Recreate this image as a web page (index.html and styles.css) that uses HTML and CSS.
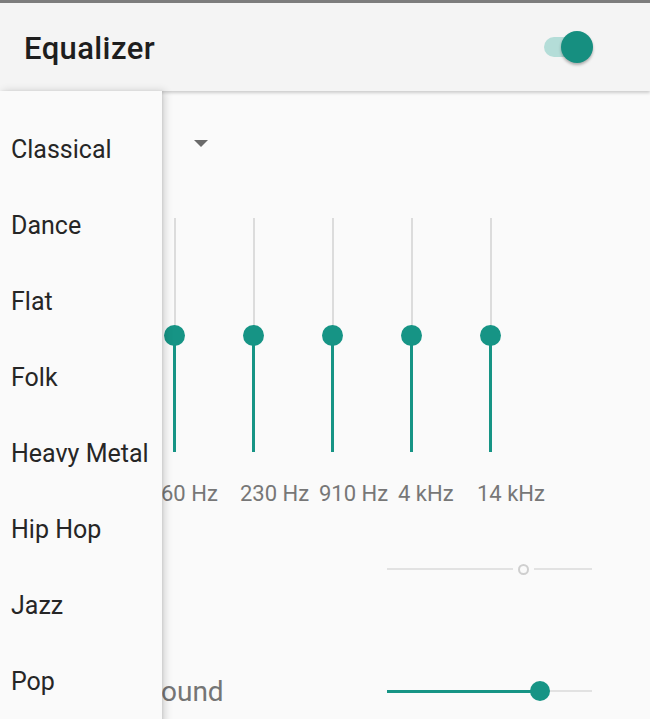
FILE: index.html
```html
<!DOCTYPE html>
<html>
<head>
<meta charset="utf-8">
<link rel="stylesheet" href="styles.css">
</head>
<body>
<div class="screen">
  <header class="appbar">
    <h1 class="title">Equalizer</h1>
    <div class="switch"><span class="switch-track"></span><span class="switch-thumb"></span></div>
  </header>
  <main class="content">
    <div class="preset-row">
      <span class="preset-label"></span>
      <span class="spinner-arrow"></span>
    </div>
    <div class="bands">
      <div class="band">
        <div class="vslider"><span class="vs-top"></span><span class="vs-bottom"></span><span class="vs-thumb"></span></div>
        <span class="band-label">60 Hz</span>
      </div>
      <div class="band">
        <div class="vslider"><span class="vs-top"></span><span class="vs-bottom"></span><span class="vs-thumb"></span></div>
        <span class="band-label">230 Hz</span>
      </div>
      <div class="band">
        <div class="vslider"><span class="vs-top"></span><span class="vs-bottom"></span><span class="vs-thumb"></span></div>
        <span class="band-label">910 Hz</span>
      </div>
      <div class="band">
        <div class="vslider"><span class="vs-top"></span><span class="vs-bottom"></span><span class="vs-thumb"></span></div>
        <span class="band-label">4 kHz</span>
      </div>
      <div class="band">
        <div class="vslider"><span class="vs-top"></span><span class="vs-bottom"></span><span class="vs-thumb"></span></div>
        <span class="band-label">14 kHz</span>
      </div>
    </div>
    <div class="setting-row row-bass">
      <span class="setting-label"></span>
      <div class="hslider disabled">
        <span class="hs-left off"></span>
        <span class="hs-ring"></span>
        <span class="hs-right"></span>
      </div>
    </div>
    <div class="setting-row row-surround">
      <span class="setting-label surround-label">Virtual surround</span>
      <div class="hslider">
        <span class="hs-left on"></span>
        <span class="hs-knob"></span>
        <span class="hs-right"></span>
      </div>
    </div>
  </main>
  <ul class="menu">
    <li class="menu-item">Classical</li>
    <li class="menu-item">Dance</li>
    <li class="menu-item">Flat</li>
    <li class="menu-item">Folk</li>
    <li class="menu-item">Heavy Metal</li>
    <li class="menu-item">Hip Hop</li>
    <li class="menu-item">Jazz</li>
    <li class="menu-item">Pop</li>
  </ul>
</div>
</body>
</html>
```
FILE: styles.css
```css
* { box-sizing: border-box; }
html, body {
  margin: 0;
  padding: 0;
  width: 650px;
  height: 719px;
  overflow: hidden;
  background: #fafafa;
  font-family: Roboto, "Noto Sans", sans-serif;
}
.screen {
  position: relative;
  width: 650px;
  height: 719px;
  border-top: 3px solid #7d7d7d;
  overflow: hidden;
}
.appbar {
  position: relative;
  z-index: 2;
  height: 88px;
  background: #f4f4f4;
  display: flex;
  align-items: center;
  justify-content: space-between;
  padding: 0 57px 0 24px;
  box-shadow: 0 2px 3px rgba(0,0,0,0.18);
}
.title {
  margin: 0;
  font-size: 31px;
  font-weight: 500;
  letter-spacing: 0.4px;
  color: #1e1e1e;
  padding-top: 2px;
}
.switch {
  position: relative;
  width: 50px;
  height: 32px;
  display: flex;
  align-items: center;
}
.switch-track {
  display: block;
  width: 46px;
  height: 20px;
  margin-left: 1px;
  border-radius: 10px;
  background: #b4ddd8;
}
.switch-thumb {
  position: absolute;
  right: 0;
  top: 0;
  width: 32px;
  height: 32px;
  border-radius: 50%;
  background: #168f80;
  box-shadow: 0 2px 3px rgba(0,0,0,0.3);
}
.content {
  display: flex;
  flex-direction: column;
  padding-left: 24px;
}
.preset-row {
  height: 104px;
  display: flex;
  align-items: center;
}
.preset-label {
  width: 170px;
}
.spinner-arrow {
  width: 0;
  height: 0;
  border-left: 7px solid transparent;
  border-right: 7px solid transparent;
  border-top: 7px solid #6a6a6a;
}
.bands {
  display: flex;
  padding-left: 137px;
  padding-top: 23px;
}
.band {
  width: 79px;
  display: flex;
  flex-direction: column;
}
.vslider {
  position: relative;
  width: 3px;
  height: 234px;
  margin-left: 12px;
  display: flex;
  flex-direction: column;
  align-items: center;
}
.vs-top {
  flex: 1;
  width: 2px;
  background: #dcdcdc;
}
.vs-bottom {
  flex: 1;
  width: 3px;
  background: #169485;
}
.vs-thumb {
  position: absolute;
  left: -9px;
  top: 107px;
  width: 21px;
  height: 21px;
  border-radius: 50%;
  background: #169485;
}
.band-label {
  margin-top: 29px;
  font-size: 22px;
  color: #777;
  white-space: nowrap;
  line-height: 26px;
}
.setting-row {
  display: flex;
  align-items: center;
  justify-content: space-between;
  padding-right: 58px;
}
.row-bass {
  height: 40px;
  margin-top: 42px;
}
.row-surround {
  height: 40px;
  margin-top: 80px;
}
.setting-label {
  font-size: 28px;
  color: #757575;
}
.surround-label {
  padding-top: 4px;
  white-space: nowrap;
}
.hslider {
  width: 205px;
  display: flex;
  align-items: center;
}
.hs-left, .hs-right {
  height: 2px;
  background: #e2e2e2;
}
.disabled .hs-left { width: 126px; }
.disabled .hs-right { flex: 1; margin-left: 5px; }
.hs-left.off { margin-right: 5px; }
.hs-ring {
  width: 11px;
  height: 11px;
  border-radius: 50%;
  border: 2px solid #cfcfcf;
}
.hs-left.on {
  width: 147px;
  height: 3px;
  background: #169485;
}
.row-surround .hslider { padding-top: 4px; }
.hs-knob {
  width: 20px;
  height: 20px;
  border-radius: 50%;
  background: #169485;
  margin: 0 -4px;
  position: relative;
}
.hslider:not(.disabled) .hs-right { flex: 1; }
.menu {
  position: absolute;
  left: 0;
  top: 88px;
  width: 162px;
  height: 640px;
  margin: 0;
  padding: 20px 0 0;
  list-style: none;
  background: #fafafa;
  z-index: 3;
  box-shadow: 3px 0 8px rgba(0,0,0,0.16), 1px 0 2px rgba(0,0,0,0.08);
}
.menu-item {
  height: 76px;
  display: flex;
  align-items: center;
  padding-left: 11px;
  font-size: 25px;
  color: #262626;
  white-space: nowrap;
}
```
